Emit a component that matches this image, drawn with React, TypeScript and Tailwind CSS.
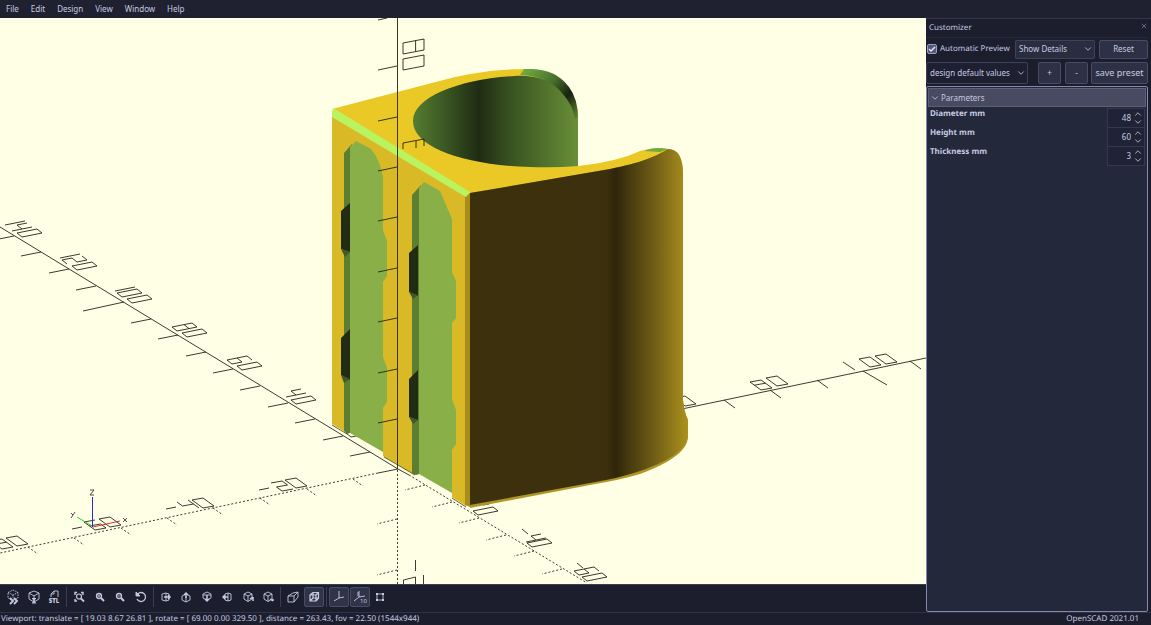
import type { ReactNode } from 'react';
import { ChevronDown, ChevronUp, X } from 'lucide-react';

type Point = [number, number];

// Segments of each digit on a unit cell: x goes across, y goes up.
const SEGMENTS: Record<string, Point[][]> = {
  '0': [[[0, 0], [0, 1], [1, 1], [1, 0], [0, 0]]],
  '1': [[[1, 0], [1, 1]]],
  '2': [[[0, 1], [1, 1], [1, 0.5], [0, 0.5], [0, 0], [1, 0]]],
  '4': [[[0, 1], [0, 0.5], [1, 0.5]], [[1, 0], [1, 1]]],
  '6': [[[1, 1], [0, 1], [0, 0], [1, 0], [1, 0.5], [0, 0.5]]],
  '8': [[[0, 0], [0, 1], [1, 1], [1, 0], [0, 0]], [[0, 0.6], [1, 0.6]]],
};

// How a digit cell is projected for the labels of each axis.
const PLANES: Record<string, { across: Point; up: Point }> = {
  x: { across: [11, -2], up: [-11, -8] },
  y: { across: [5, 4], up: [20, -4] },
  z: { across: [0, 11], up: [21, -4] },
};

const DIGITS: [string, string, number, number][] = [
  ['y', '1', 0, 221], ['y', '4', 7, 227], ['y', '0', 17, 233],
  ['y', '1', 55, 254], ['y', '2', 62, 260], ['y', '0', 72, 266],
  ['y', '1', 110, 287], ['y', '0', 117, 293], ['y', '0', 127, 299],
  ['y', '8', 172, 327], ['y', '0', 182, 333],
  ['y', '6', 227, 360], ['y', '0', 237, 366],
  ['y', '4', 281, 393], ['y', '0', 291, 400],
  ['y', '0', 346, 433],
  ['y', '0', 473, 511],
  ['y', '4', 521, 538], ['y', '0', 527, 543],
  ['y', '6', 574, 571], ['y', '0', 582, 577],
  ['x', '0', 685, 406],
  ['x', '8', 761, 390], ['x', '0', 777, 386],
  ['x', '0', 870, 367], ['x', '0', 886, 364],
  ['x', '2', 282, 491], ['x', '0', 296, 488],
  ['x', '4', 188, 510], ['x', '0', 203, 508],
  ['x', '6', 95, 530], ['x', '0', 110, 527],
  ['x', '8', 2, 549], ['x', '0', 17, 546],
];

function Digit({ plane, value, x, y }: { plane: string; value: string; x: number; y: number }) {
  const { across, up } = PLANES[plane];
  const d = SEGMENTS[value]
    .map((line) =>
      line
        .map(([u, v], i) => `${i ? 'L' : 'M'}${x + across[0] * u + up[0] * v} ${y + across[1] * u + up[1] * v}`)
        .join(''),
    )
    .join('');
  return <path d={d} />;
}

function Axes() {
  const yTicks: Point[] = [
    [14, 236], [41, 252], [69, 269], [96, 286], [151, 319], [178, 335], [206, 352],
    [233, 369], [260, 386], [288, 403], [315, 419], [343, 436], [370, 452],
  ];
  const yNegativeTicks: Point[] = [[425, 485], [452, 502], [479, 518], [506, 535], [534, 551], [562, 569]];
  const xTicks: Point[] = [[724, 400], [770, 390], [817, 380], [910, 361]];
  const xNegativeTicks: Point[] = [
    [353, 479], [307, 489], [260, 498], [213, 508], [167, 518], [121, 528], [74, 538], [28, 547],
  ];
  return (
    <g fill="none" stroke="#26261f" strokeWidth="0.9">
      <path d="M0 227L398 469M378 473L398 469L409 475M677 410L926 358" />
      {yTicks.map(([x, y]) => <path key={x} d={`M${x} ${y}l-20 4`} />)}
      {xTicks.map(([x, y]) => <path key={x} d={`M${x} ${y}l11 8`} />)}
      <path d="M124 302l-41 9M863 371l24 14M843 362l12 8" />
      <g strokeDasharray="2 2">
        <path d="M378 473L0 553M409 475L587 583M397.500 470V584M397 519l-20 5M397 570l-20 5" />
        {yNegativeTicks.map(([x, y]) => <path key={x} d={`M${x} ${y}l-20 5`} />)}
        {xNegativeTicks.map(([x, y]) => <path key={x} d={`M${x} ${y}l10 7`} />)}
      </g>
      {DIGITS.map(([plane, value, x, y]) => (
        <Digit key={`${x}-${y}`} plane={plane} value={value} x={x} y={y} />
      ))}
      <path d="M259 490l10-2M166 509l10-2M72 529l10-2M522 529l6 5M577 563l6 5M483 505l6-1" />
      <path d="M415.500 560V571M403.500 584V580L415.500 577V584M423.500 575V584" />
    </g>
  );
}

function Model() {
  return (
    <g>
      <defs>
        <linearGradient id="bore" gradientUnits="userSpaceOnUse" x1="413" y1="0" x2="578" y2="0">
          <stop offset="0" stopColor="#567c31" />
          <stop offset="0.18" stopColor="#3d5a24" />
          <stop offset="0.4" stopColor="#1f2c13" />
          <stop offset="0.6" stopColor="#3a5421" />
          <stop offset="1" stopColor="#688f37" />
        </linearGradient>
        <linearGradient id="rim" gradientUnits="userSpaceOnUse" x1="523" y1="70" x2="578" y2="120">
          <stop offset="0" stopColor="#6fae42" />
          <stop offset="0.4" stopColor="#47702c" />
          <stop offset="0.68" stopColor="#18220f" />
          <stop offset="1" stopColor="#638c36" />
        </linearGradient>
        <linearGradient id="shell" gradientUnits="userSpaceOnUse" x1="470" y1="0" x2="688" y2="0">
          <stop offset="0" stopColor="#3d310d" />
          <stop offset="0.63" stopColor="#3b2f0d" />
          <stop offset="0.67" stopColor="#2f250b" />
          <stop offset="0.72" stopColor="#43370e" />
          <stop offset="0.86" stopColor="#766217" />
          <stop offset="1" stopColor="#ab921d" />
        </linearGradient>
      </defs>
      <path
        fill="#eac926"
        d="M332 109L455 77C480 72 500 69 530 69L578 110V166C605 163 625 158 640 151Q654 147 668 149L665 190L470 194Z"
      />
      <path fill="#ffffe5" d="M578 60H700V140H650Q640 150 620 156Q600 162 578 165Z" />
      <path fill="url(#bore)" d="M413 121C413 97 460 79 515 76C552 74 578 94 578 120V166Q555 168 530 167C465 165 413 148 413 121Z" />
      <path
        fill="url(#rim)"
        d="M524 69C548 68 560 75 569 87Q578 99 578 118L575 119Q573 105 562 93Q548 76 520 75Z"
      />
      <path
        fill="#ae9527"
        d="M470 193L610 169C640 163 655 157 668 149Q683 149 683 175V400Q684 412 688 420V436C688 450 672 462 640 474Q620 480 590 485L470 508Z"
      />
      <path
        fill="url(#shell)"
        d="M470 193L610 169C640 163 655 157 668 149Q683 149 683 175V400Q684 412 688 420V435C688 448 672 460 640 471Q620 478 590 483L470 505Z"
      />
      <path fill="#6eaa3f" d="M644 151Q654 146 668 149L660 152Z" />
      <path
        fill="#d9ba26"
        d="M332 115L466 196V506L452 497V300L419 200V474L415 475L383 456V200L350 160V432L347 433L332 424Z"
      />
      <path fill="#d9ba26" d="M344 124L466 196V400H452L440 191L424 182L412 195V400H383L371 149L356 141L344 153Z" />
      <path fill="#a98d1b" d="M465 196L470 193V507L465 505Z" />
      <path fill="#b9f35f" d="M332 112Q332 109 335 109L470 192L466 197L332 117Z" />

      <path fill="#5c7e30" d="M344 153L352 144V432L347 434L344 431Z" />
      <path
        fill="#89b048"
        d="M350 147L356 141L371 149Q380 160 383 177V230L387 241V276L383 282V357L387 368V402L383 408V452L350 433Z"
      />
      <path fill="#5c7e30" d="M412 195L421 185V473L416 475L412 473Z" />
      <path
        fill="#89b048"
        d="M419 188L424 182L440 191L452 219V272L456 281V318L452 323V399L456 410V444L452 450V493L419 474Z"
      />
      <g fill="#222b13">
        <path d="M341 211L350 203V252L341 249ZM341 338L350 329V380L341 375Z" />
        <path d="M409 253L418 245V296L409 292ZM409 379L418 370V420L409 417Z" />
      </g>
      <g fill="#42572a">
        <path d="M341 249L350 252L345 257ZM341 375L350 379L344 383Z" />
        <path d="M409 292L418 295L413 299ZM409 417L418 420L413 424Z" />
      </g>
      <path fill="none" stroke="#4b3e10" strokeWidth="0.8" d="M332 425L347 434M384 457L415 475M452 498L466 507" />
    </g>
  );
}

function Viewport() {
  return (
    <svg
      className="min-h-0 w-full flex-1 bg-[#ffffe5]"
      viewBox="0 18 926 566"
      preserveAspectRatio="xMinYMin slice"
      role="img"
      aria-label="3D view"
    >
      <Axes />
      <Model />
      <g fill="none" stroke="#26220e" strokeWidth="0.9">
        <path d="M397.500 18V469" />
        <path d="M378 20l9-2M378 70l19-4M378 121l19-4M378 171l19-4M378 221l19-4M378 272l19-4M378 322l19-4M378 373l19-4M378 423l19-4" />
        <Digit plane="z" value="8" x={403} y={43} />
        <Digit plane="z" value="0" x={403} y={59} />
        <path d="M403 149V143L424 139V146M416 141V148" />
      </g>
      <g fill="none" strokeWidth="1">
        <path stroke="#2a2ae0" d="M92.500 497V527" />
        <path stroke="#e03030" d="M93 527L120 521" />
        <path stroke="#30d030" d="M77 517L92 526" />
      </g>
      <g fill="none" stroke="#3b3b34" strokeWidth="0.9">
        <path d="M90 490H94L90 495H94M123 518L127 522M127 518L123 522M71 513L73 515M75 512L71 518" />
      </g>
    </svg>
  );
}

const CUBE = 'M8 3L12 5V10L8 12.500L4 10V5ZM4 5L8 7L12 5M8 7V12.500';

interface Tool {
  label: string;
  icon: ReactNode;
  active?: boolean;
}

const TOOL_GROUPS: { width: string; tools: Tool[] }[] = [
  {
    width: 'w-[61px]',
    tools: [
      {
        label: 'Preview',
        icon: (
          <>
            <path strokeDasharray="1.500 1" d="M8 1L13 3.500V9L8 11L3 9V3.500ZM3 3.500L8 6L13 3.500M8 6V9" />
            <path strokeWidth="1.800" d="M5 9L8 12L5 15M9 9L12 12L9 15" />
          </>
        ),
      },
      {
        label: 'Render',
        icon: (
          <>
            <path d="M8 2L13 4V10L8 13L3 10V4ZM3 4L8 7L13 4M8 7V10" />
            <path strokeWidth="1.200" d="M6 9.500H10M6 14H10M7 10L9 13.500M9 10L7 13.500" />
          </>
        ),
      },
      {
        label: 'Export as STL',
        icon: (
          <>
            <path d="M5 8V5L8 2H12V8M5 5H8V2" />
            <text x="8" y="14" textAnchor="middle" fill="currentColor" stroke="none" className="text-[6px] font-black">STL</text>
          </>
        ),
      },
    ],
  },
  {
    width: 'w-[82px]',
    tools: [
      {
        label: 'View All',
        icon: (
          <>
            <path strokeWidth="1.400" d="M4 6V3.500H6M10 3.500H12V6M4 10V12H6" />
            <circle cx="8" cy="7.500" r="2.500" strokeWidth="1.200" />
            <path strokeWidth="1.800" d="M10 9.500L13 12.500" />
          </>
        ),
      },
      {
        label: 'Zoom In',
        icon: (
          <>
            <circle cx="7" cy="7" r="2.500" strokeWidth="1.300" />
            <path strokeWidth="2" d="M9 9L12 12" />
            <path strokeWidth="0.8" d="M5.500 7H8.500M7 5.500V8.500" />
          </>
        ),
      },
      {
        label: 'Zoom Out',
        icon: (
          <>
            <circle cx="7" cy="7" r="2.500" strokeWidth="1.300" />
            <path strokeWidth="2" d="M9 9L12 12" />
            <path d="M5.500 7H8.500" />
          </>
        ),
      },
      {
        label: 'Reset View',
        icon: (
          <>
            <path strokeWidth="1.300" d="M4 6A4.500 4.500 0 1 1 4 10" />
            <path fill="currentColor" d="M3 3V7H7Z" />
          </>
        ),
      },
    ],
  },
  {
    width: 'w-[122px]',
    tools: [
      { label: 'Right', icon: <><path d="M4 5L8 4L11 5V11L8 12L4 11ZM8 4V12" /><path strokeWidth="1.500" d="M6 8H12M10 6L12 8L10 10" /></> },
      { label: 'Top', icon: <><path d="M4 7L8 5L12 7V11L8 13L4 11ZM8 8V13" /><path strokeWidth="1.500" d="M8 9V4M6 6L8 4L10 6" /></> },
      { label: 'Bottom', icon: <><path d="M4 5L8 3L12 5V9L8 11L4 9ZM4 6H12" /><path strokeWidth="1.500" d="M8 6V12M6 10L8 12L10 10" /></> },
      { label: 'Left', icon: <><path d="M6 5L9 4L12 5V11L9 12L6 11ZM9 4V12" /><path strokeWidth="1.500" d="M9 8H4M6 6L4 8L6 10" /></> },
      { label: 'Front', icon: <><path d={CUBE} /><path strokeWidth="1.500" d="M13 8L10 10M13 8V12" /></> },
      { label: 'Back', icon: <><path d={CUBE} /><path strokeWidth="1.500" d="M10 10L13 12M13 10V12" /></> },
    ],
  },
  {
    width: 'w-[41px]',
    tools: [
      { label: 'Perspective', icon: <path d="M3 7H9V13H3ZM3 7L8 4L13 3L9 7M13 3V8L9 13" /> },
      { label: 'Orthogonal', active: true, icon: <path strokeWidth="1.200" d="M4 6H10V12H4ZM7 3.500H12.500V9H7ZM4 6L7 3.500M10 6L12.500 3.500M4 12L7 9M10 12L12.500 9" /> },
    ],
  },
  {
    width: 'w-[61px]',
    tools: [
      { label: 'Show Axes', active: true, icon: <path d="M8 2V9L13 8M8 9L3 12" /> },
      {
        label: 'Show Scale Markers',
        active: true,
        icon: (
          <>
            <path d="M7 2V8L2 12M7 8L13 7M5 4H7M5 6H7" />
            <text x="8" y="14" fill="currentColor" stroke="none" className="text-[6px]">10</text>
          </>
        ),
      },
      {
        label: 'Show Edges',
        icon: (
          <>
            <path d="M5 5H11V11H5Z" />
            <path strokeWidth="2" d="M4 5H6M10 5H12M4 11H6M10 11H12" />
          </>
        ),
      },
    ],
  },
];

function Toolbar() {
  return (
    <div role="toolbar" className="flex h-[28px] items-center border-t border-[#3a3b55] pb-[3px] pl-[3px]">
      {TOOL_GROUPS.map((group, i) => (
        <div key={group.width + i} className="flex items-center">
          {i > 0 && <div className="mr-0.5 ml-0.5 h-5 w-px bg-[#3b3d54]" />}
          <div className={`flex justify-between ${group.width}`}>
            {group.tools.map((tool) => (
              <button
                key={tool.label}
                type="button"
                aria-label={tool.label}
                aria-pressed={tool.active}
                className={`flex h-5 w-5 items-center justify-center rounded-xs border ${
                  tool.active ? 'border-[#4a4d68] bg-[#303449]' : 'border-transparent'
                }`}
              >
                <svg viewBox="0 0 16 16" className="h-4 w-4 shrink-0" fill="none" stroke="currentColor" strokeWidth="0.9">
                  {tool.icon}
                </svg>
              </button>
            ))}
          </div>
        </div>
      ))}
    </div>
  );
}

function Select({ label, value, className }: { label: string; value: string; className: string }) {
  return (
    <div className={`relative ${className}`}>
      <select
        aria-label={label}
        defaultValue={value}
        className="h-full w-full appearance-none rounded-xs border border-[#3f4159] bg-inherit pl-[3px] text-[8px] outline-none"
      >
        <option>{value}</option>
      </select>
      <ChevronDown className="pointer-events-none absolute top-1/2 right-[2px] h-2.5 w-2.5 -translate-y-1/2" strokeWidth={2} />
    </div>
  );
}

const PARAMETERS = [
  { id: 'diameter', label: 'Diameter mm', value: 48 },
  { id: 'height', label: 'Height mm', value: 60 },
  { id: 'thickness', label: 'Thickness mm', value: 3 },
];

function Customizer() {
  return (
    <aside className="flex w-[225px] shrink-0 flex-col border-t border-[#34364c] pr-[3px]">
      <div className="flex h-[18px] items-center justify-between pl-[3px]">
        <h2>Customizer</h2>
        <button type="button" aria-label="Close" className="-mt-1">
          <X className="h-2 w-2 text-[#8b8ea8]" />
        </button>
      </div>
      <div className="flex h-[23px] items-center border-t border-[#25273a]">
        <label className="flex flex-1 items-center gap-[3px] pl-px">
          <span className="relative flex">
            <input
              type="checkbox"
              defaultChecked
              className="peer h-[10px] w-[10px] appearance-none rounded-xs border border-[#9a9cc8] bg-[#54567a]"
            />
            <svg viewBox="0 0 10 10" className="pointer-events-none absolute inset-0 hidden peer-checked:block" fill="none" stroke="#e4e6fa" strokeWidth="1.500">
              <path d="M2 5L4 7L8 3" />
            </svg>
          </span>
          Automatic Preview
        </label>
        <Select label="Detail level" value="Show Details" className="mr-1 h-[19px] w-[80px] bg-[#2a2c3f]" />
        <button type="button" className="h-[19px] w-[49px] rounded-xs border border-[#484b66] bg-[#2e3145]">Reset</button>
      </div>
      <div className="flex h-[26px] items-center">
        <Select label="Preset" value="design default values" className="mr-[10px] h-[22px] w-[102px] bg-[#1e2031]" />
        <button type="button" className="mr-1 h-[22px] w-[23px] rounded-xs border border-[#484b66] bg-[#2e3145]">+</button>
        <button type="button" className="mr-[3px] h-[22px] w-[23px] rounded-xs border border-[#484b66] bg-[#2e3145]">-</button>
        <button type="button" className="h-[22px] flex-1 rounded-xs border border-[#484b66] bg-[#2e3145] text-[9px] whitespace-nowrap">
          save preset
        </button>
      </div>
      <section className="flex-1 rounded-xs border border-[#8486ab] bg-[#24283b] p-px">
        <button type="button" aria-expanded="true" className="mb-px flex h-[19px] w-full items-center gap-px border border-[#5c5e7a] bg-[#484a62] pl-px">
          <ChevronDown className="h-2.5 w-2.5" />
          Parameters
        </button>
        {PARAMETERS.map(({ id, label, value }) => (
          <div key={id} className="flex h-[19px] items-start justify-between pr-px pl-0.5">
            <label htmlFor={id} className="leading-3 font-bold">{label}</label>
            <div className="flex h-[20px] w-[38px] items-center border border-[#34374d] bg-[#202335]">
              <input id={id} type="text" inputMode="numeric" defaultValue={value} className="w-[23px] bg-transparent text-right outline-none" />
              <span className="ml-0.5 flex flex-col">
                <button type="button" aria-label={`Increase ${label}`}><ChevronUp className="h-2 w-2.5" preserveAspectRatio="xMidYMid slice" /></button>
                <button type="button" aria-label={`Decrease ${label}`}><ChevronDown className="h-2 w-2.5" preserveAspectRatio="xMidYMid slice" /></button>
              </span>
            </div>
          </div>
        ))}
      </section>
    </aside>
  );
}

export default function App() {
  return (
    <div className="flex h-screen flex-col overflow-hidden bg-[#1c1e2e] font-['Noto_Sans',sans-serif] text-[8px] text-[#c6c9e0] [text-rendering:geometricPrecision]">
      <nav className="flex h-[18px] shrink-0 items-center gap-3 bg-[#1f2131] pl-[6px]">
        {['File', 'Edit', 'Design', 'View', 'Window', 'Help'].map((item) => (
          <button key={item} type="button">{item}</button>
        ))}
      </nav>
      <div className="flex min-h-0 flex-1">
        <main className="flex min-w-0 flex-1 flex-col">
          <Viewport />
          <Toolbar />
        </main>
        <Customizer />
      </div>
      <footer className="flex h-[13px] shrink-0 items-center justify-between border-t border-[#30324a] pr-3 pl-px">
        <span>Viewport: translate = [ 19.03 8.67 26.81 ], rotate = [ 69.00 0.00 329.50 ], distance = 263.43, fov = 22.50 (1544x944)</span>
        <span>OpenSCAD 2021.01</span>
      </footer>
    </div>
  );
}
